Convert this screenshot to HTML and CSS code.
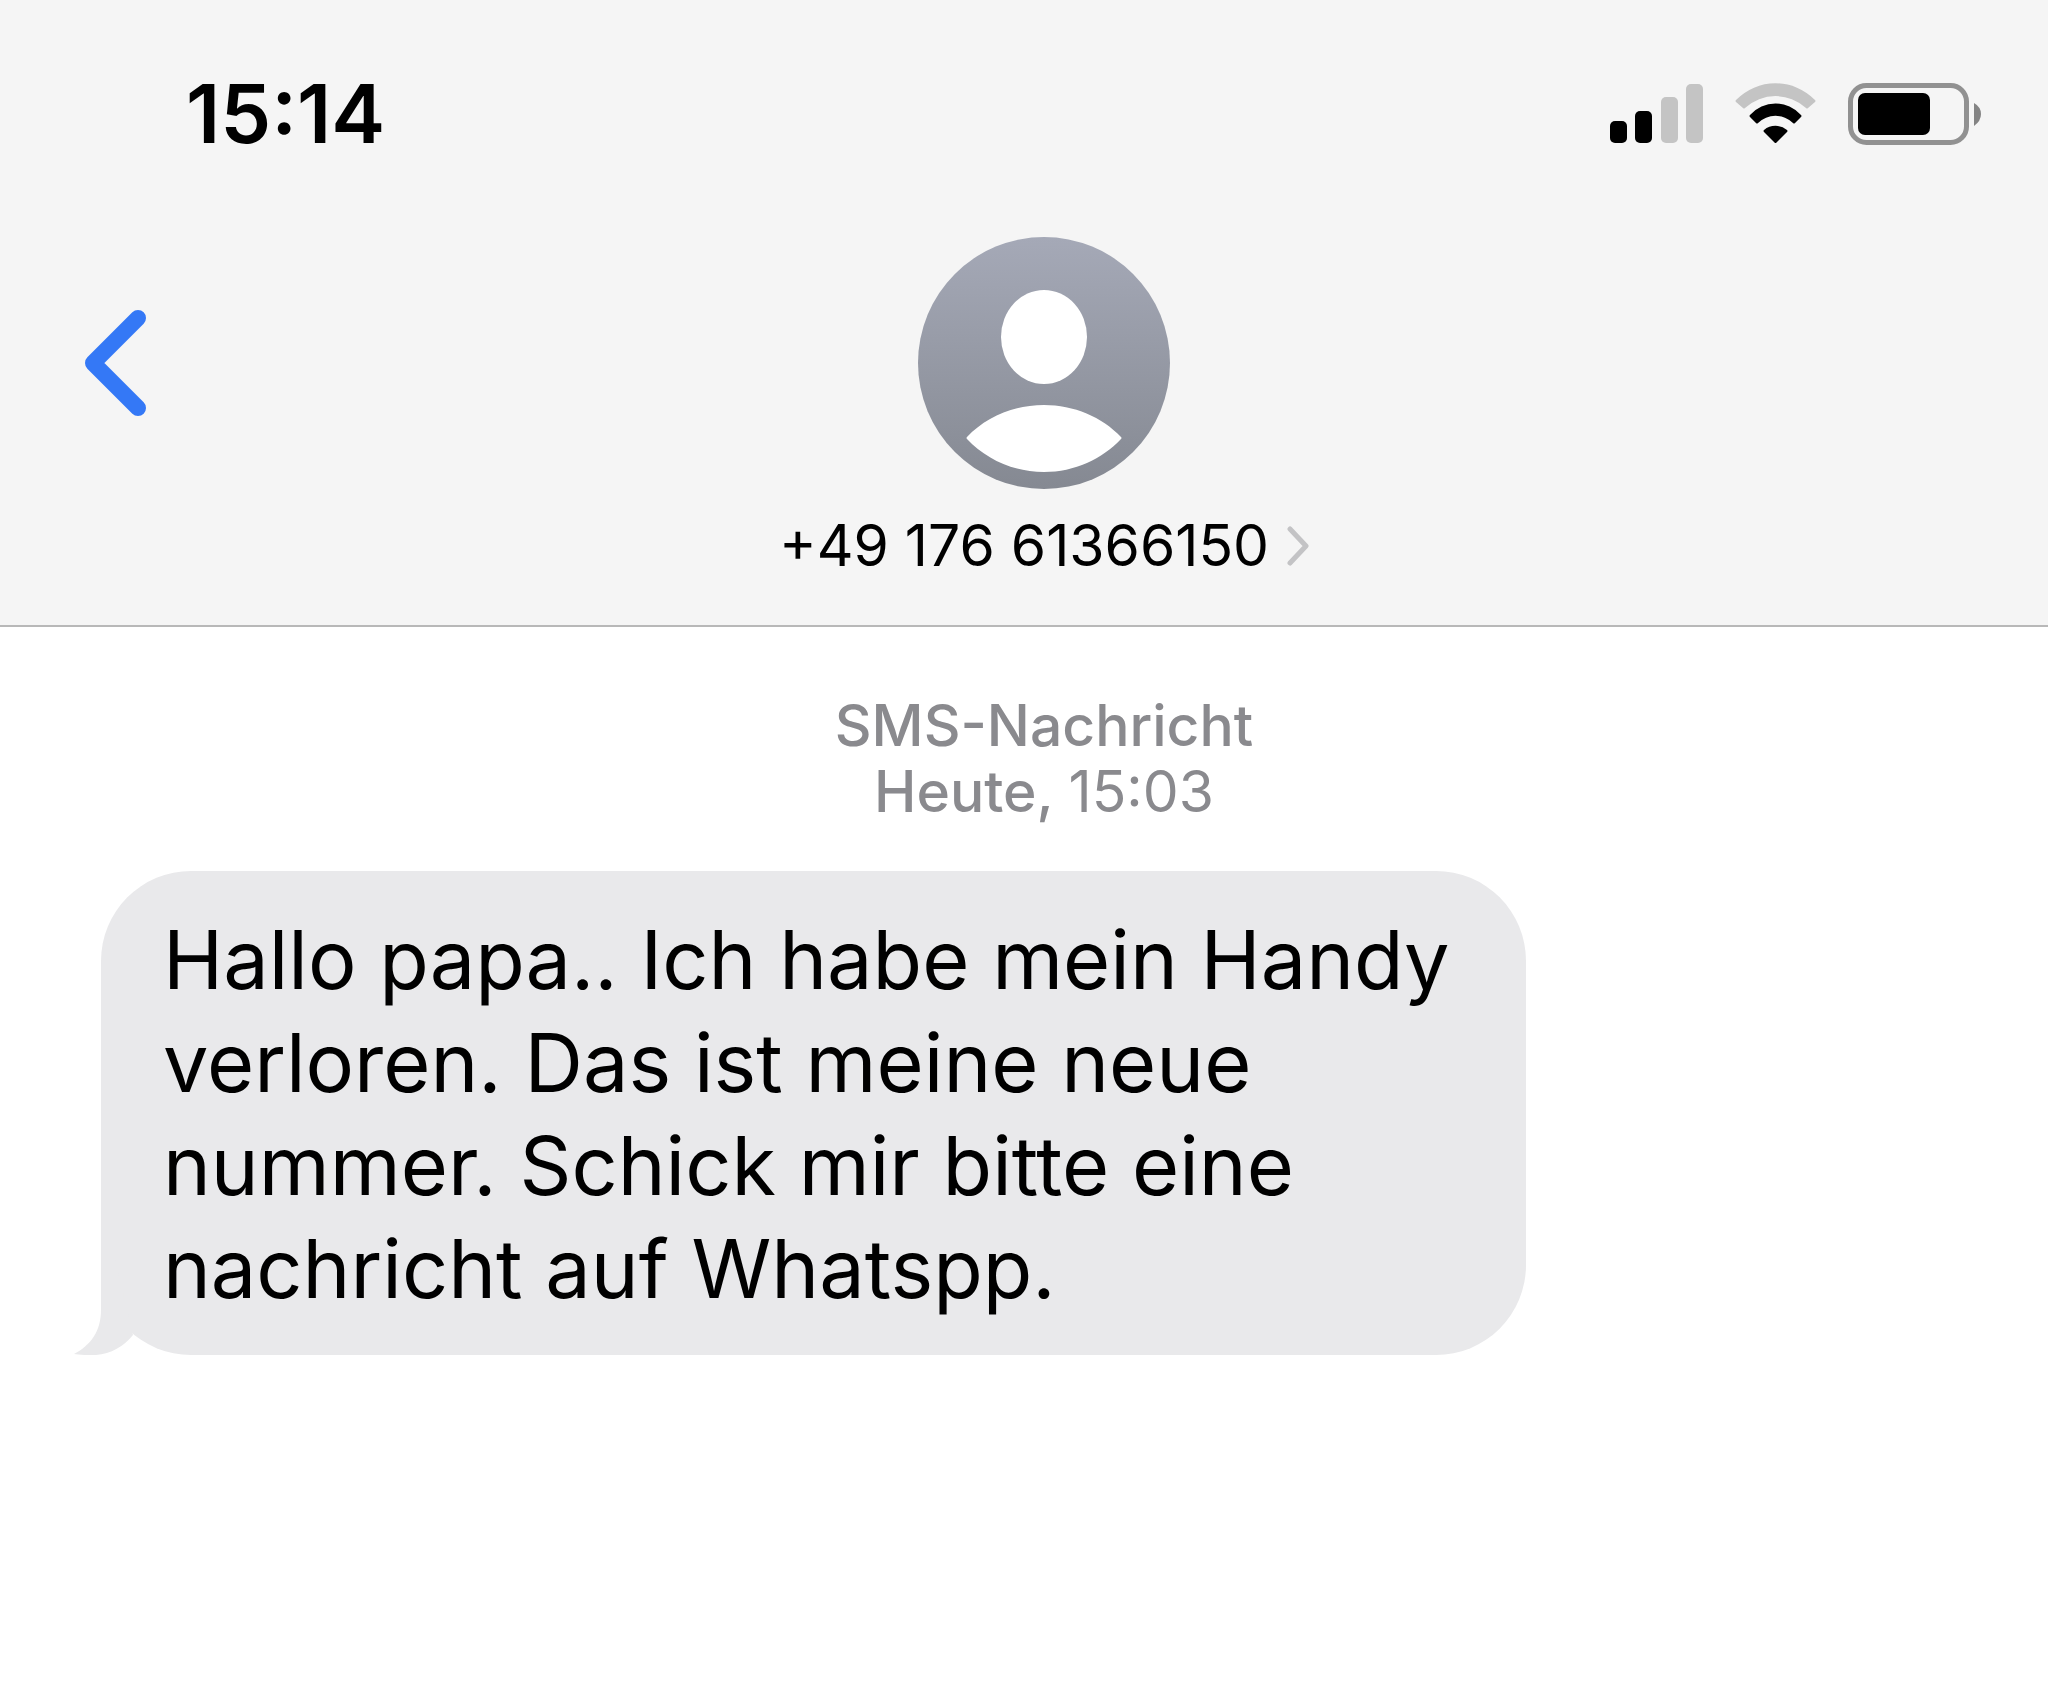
FILE: index.html
```html
<!DOCTYPE html>
<html lang="de">
<head>
  <meta charset="UTF-8">
  <meta name="viewport" content="width=device-width, initial-scale=1.0">
  <title>Nachrichten</title>
  <link rel="stylesheet" href="styles.css">
</head>
<body>
  <header class="header">
    <div class="status-bar">
      <time class="clock">15:14</time>
      <div class="status-icons">
        <svg width="93" height="62" viewBox="0 0 93 62" role="img" aria-label="Signal">
          <rect x="0" y="38" width="17" height="22" rx="5"/>
          <rect x="25" y="28" width="17" height="32" rx="5"/>
          <rect x="51" y="14" width="17" height="46" rx="5" fill="#c4c4c4"/>
          <rect x="76" y="1" width="17" height="59" rx="5" fill="#c4c4c4"/>
        </svg>
        <svg width="81" height="62" viewBox="0 0 81 62" role="img" aria-label="WLAN">
          <path d="M1 17A55 55 0 0 1 80 17Q81 18 80 19L73 25Q72 26 71 25A45 45 0 0 0 10 25Q9 26 8 25L1 19Q0 18 1 17Z" fill="#c4c4c4"/>
          <path d="M15 32A34 34 0 0 1 66 32Q67 33 66 34L60 40Q59 41 58 40A25 25 0 0 0 23 40Q22 41 21 40L15 34Q14 33 15 32Z"/>
          <path d="M29 47A18 18 0 0 1 52 47Q53 48 52 49L41 60Q40 60 40 60L29 49Q28 48 29 47Z"/>
        </svg>
        <svg width="134" height="62" viewBox="0 0 134 62" role="img" aria-label="Batterie">
          <rect x="2.5" y="2.5" width="116" height="57" rx="16" fill="none" stroke="#919191" stroke-width="5"/>
          <rect x="10" y="10" width="72" height="42" rx="7"/>
          <path d="M126 20Q133 24 133 31T126 43Z" fill="#848484"/>
        </svg>
      </div>
    </div>

    <nav class="nav">
      <button type="button" class="back" aria-label="Zurück">
        <svg width="61" height="106" viewBox="0 0 61 106">
          <path d="M53 8L8 53L53 98" fill="none" stroke="#3478f6" stroke-width="16" stroke-linecap="round" stroke-linejoin="round"/>
        </svg>
      </button>
      <svg class="avatar" width="252" height="252" viewBox="0 0 252 252" aria-hidden="true">
        <defs>
          <linearGradient id="avatarFill" x1="0" y1="0" x2="0" y2="1">
            <stop offset="0" stop-color="#a5a9b7"/>
            <stop offset="1" stop-color="#858992"/>
          </linearGradient>
        </defs>
        <circle cx="126" cy="126" r="126" fill="url(#avatarFill)"/>
        <ellipse cx="126" cy="100" rx="43" ry="47" fill="#fff"/>
        <path d="M49 200C68 180 96 168 126 168S184 180 203 200Q204 201 203 202C184 222 157 235 126 235S68 222 49 202Q48 201 49 200Z" fill="#fff"/>
      </svg>
      <a href="#" class="contact">
        +49 176 61366150
        <svg width="22" height="40" viewBox="0 0 22 40" aria-hidden="true">
          <path d="M3 3L19 20L3 37" fill="none" stroke="#c3c3c5" stroke-width="5" stroke-linecap="round" stroke-linejoin="round"/>
        </svg>
      </a>
    </nav>
  </header>

  <main class="conversation">
    <p class="timestamp">SMS-Nachricht<br>Heute, <time>15:03</time></p>
    <div class="bubble">
      Hallo papa.. Ich habe mein Handy verloren. Das ist meine neue nummer. Schick mir bitte eine nachricht auf Whatspp.
      <svg class="tail" width="60" height="100" viewBox="0 0 60 100" aria-hidden="true">
        <path d="M27 0V55C27 76 17 90 0 99C5 100 15 100 22 100C37 99 50 91 59 80L40 0Z" fill="#e9e9eb"/>
      </svg>
    </div>
  </main>
</body>
</html>
```
FILE: styles.css
```css
* {
  margin: 0;
  padding: 0;
  box-sizing: border-box;
}

body {
  font-family: Inter, "Liberation Sans", sans-serif;
  background-color: #fff;
  color: #000;
}

svg {
  display: block;
}

.header {
  padding-top: 66px;
  padding-bottom: 46px;
  background-color: #f5f5f5;
  border-bottom: 2px solid #b8b8b8;
}

.status-bar {
  display: flex;
  justify-content: space-between;
  align-items: center;
  padding: 0 66px 0 186px;
}

.clock {
  font-size: 81px;
  font-weight: 600;
  line-height: 96px;
}

.status-icons {
  display: flex;
  gap: 32px;
}

.nav {
  display: grid;
  grid-template-columns: 1fr auto 1fr;
  align-items: center;
  justify-items: center;
  row-gap: 24px;
  margin-top: 75px;
  padding: 0 45px 0 85px;
}

.back {
  justify-self: start;
  background: none;
  border: none;
  cursor: pointer;
}

.avatar {
  grid-column: 2;
}

.contact {
  grid-column: 1 / -1;
  display: flex;
  align-items: center;
  gap: 18px;
  font-size: 57px;
  line-height: 66px;
  color: #000;
  text-decoration: none;
}

.conversation {
  padding: 66px 61px 60px 101px;
}

.timestamp {
  font-size: 57px;
  font-weight: 500;
  line-height: 66px;
  text-align: center;
  color: #8a8a8e;
}

.timestamp time {
  font-weight: 400;
}

.bubble {
  position: relative;
  max-width: 1425px;
  margin-top: 46px;
  padding: 38px 62px 34px;
  border-radius: 90px;
  background-color: #e9e9eb;
  font-size: 81px;
  line-height: 103px;
}

.tail {
  position: absolute;
  left: -27px;
  bottom: 0;
}
```
